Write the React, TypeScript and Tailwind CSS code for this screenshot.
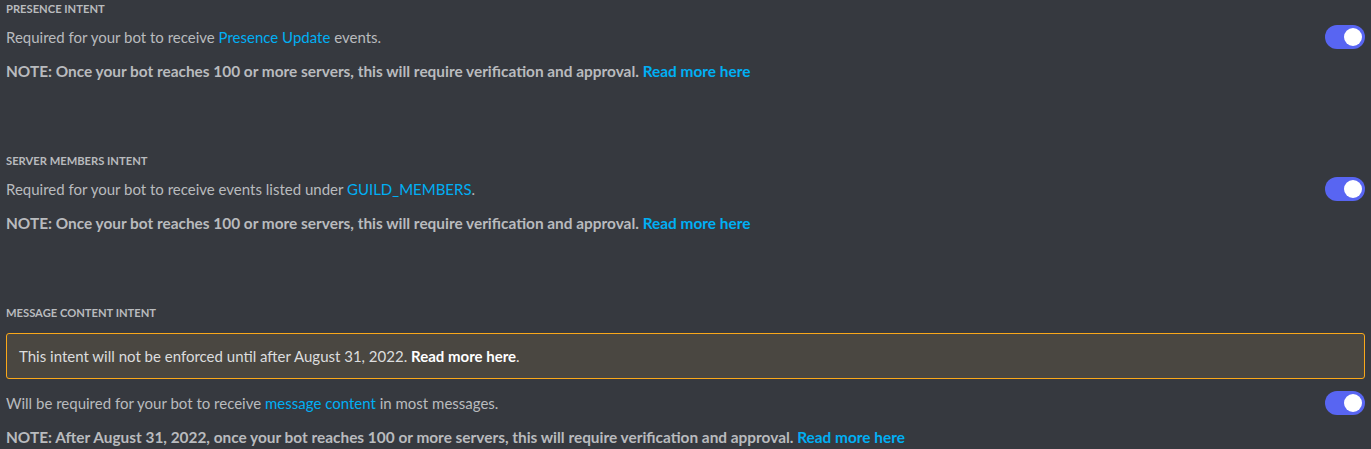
import React from "react";

function Toggle() {
  return (
    <div className="flex h-6 w-10 shrink-0 items-center justify-end rounded-full bg-[#5865f2] p-[3px]">
      <div className="h-[18px] w-[18px] rounded-full bg-white" />
    </div>
  );
}

function Link({ children, bold }: { children: React.ReactNode; bold?: boolean }) {
  return <span className={bold ? "font-bold text-[#00aff4]" : "text-[#00aff4]"}>{children}</span>;
}

function Intent({
  title,
  banner,
  description,
  note,
}: {
  title: string;
  banner?: React.ReactNode;
  description: React.ReactNode;
  note: React.ReactNode;
}) {
  return (
    <section className="flex flex-col">
      <h3 className="text-[11.2px] font-bold uppercase leading-4 text-[#b9bbbe]">{title}</h3>
      {banner}
      <div className={`${banner ? "mt-[14px]" : "mt-[10px]"} flex h-5 items-center justify-between`}>
        <p className="text-[15px] leading-5 text-[#b9bbbe]">{description}</p>
        <Toggle />
      </div>
      <p className="mt-[15px] text-[15.4px] font-bold leading-[18px] text-[#b9bbbe]">{note}</p>
    </section>
  );
}

export default function App() {
  return (
    <div
      className="min-h-[449px] w-full bg-[#36393f] px-[6px] pt-[1px]"
      style={{ fontFamily: 'Lato, "Liberation Sans", sans-serif' }}
    >
      <div className="flex flex-col gap-[73px]">
        <Intent
          title="Presence Intent"
          description={
            <>
              Required for your bot to receive <Link>Presence Update</Link> events.
            </>
          }
          note={
            <>
              NOTE: Once your bot reaches 100 or more servers, this will require verification and approval.{" "}
              <Link bold>Read more here</Link>
            </>
          }
        />
        <Intent
          title="Server Members Intent"
          description={
            <>
              Required for your bot to receive events listed under <Link>GUILD_MEMBERS</Link>.
            </>
          }
          note={
            <>
              NOTE: Once your bot reaches 100 or more servers, this will require verification and approval.{" "}
              <Link bold>Read more here</Link>
            </>
          }
        />
        <Intent
          title="Message Content Intent"
          banner={
            <div className="mt-[12px] flex h-[46px] items-center rounded-[3px] border border-[#faa81a] bg-[#4a4741] px-3 text-[15px] text-[#dcddde]">
              <span>
                This intent will not be enforced until after August 31, 2022.{" "}
                <span className="font-bold text-white">Read more here</span>.
              </span>
            </div>
          }
          description={
            <>
              Will be required for your bot to receive <Link>message content</Link> in most messages.
            </>
          }
          note={
            <>
              NOTE: After August 31, 2022, once your bot reaches 100 or more servers, this will require verification
              and approval. <Link bold>Read more here</Link>
            </>
          }
        />
      </div>
    </div>
  );
}
